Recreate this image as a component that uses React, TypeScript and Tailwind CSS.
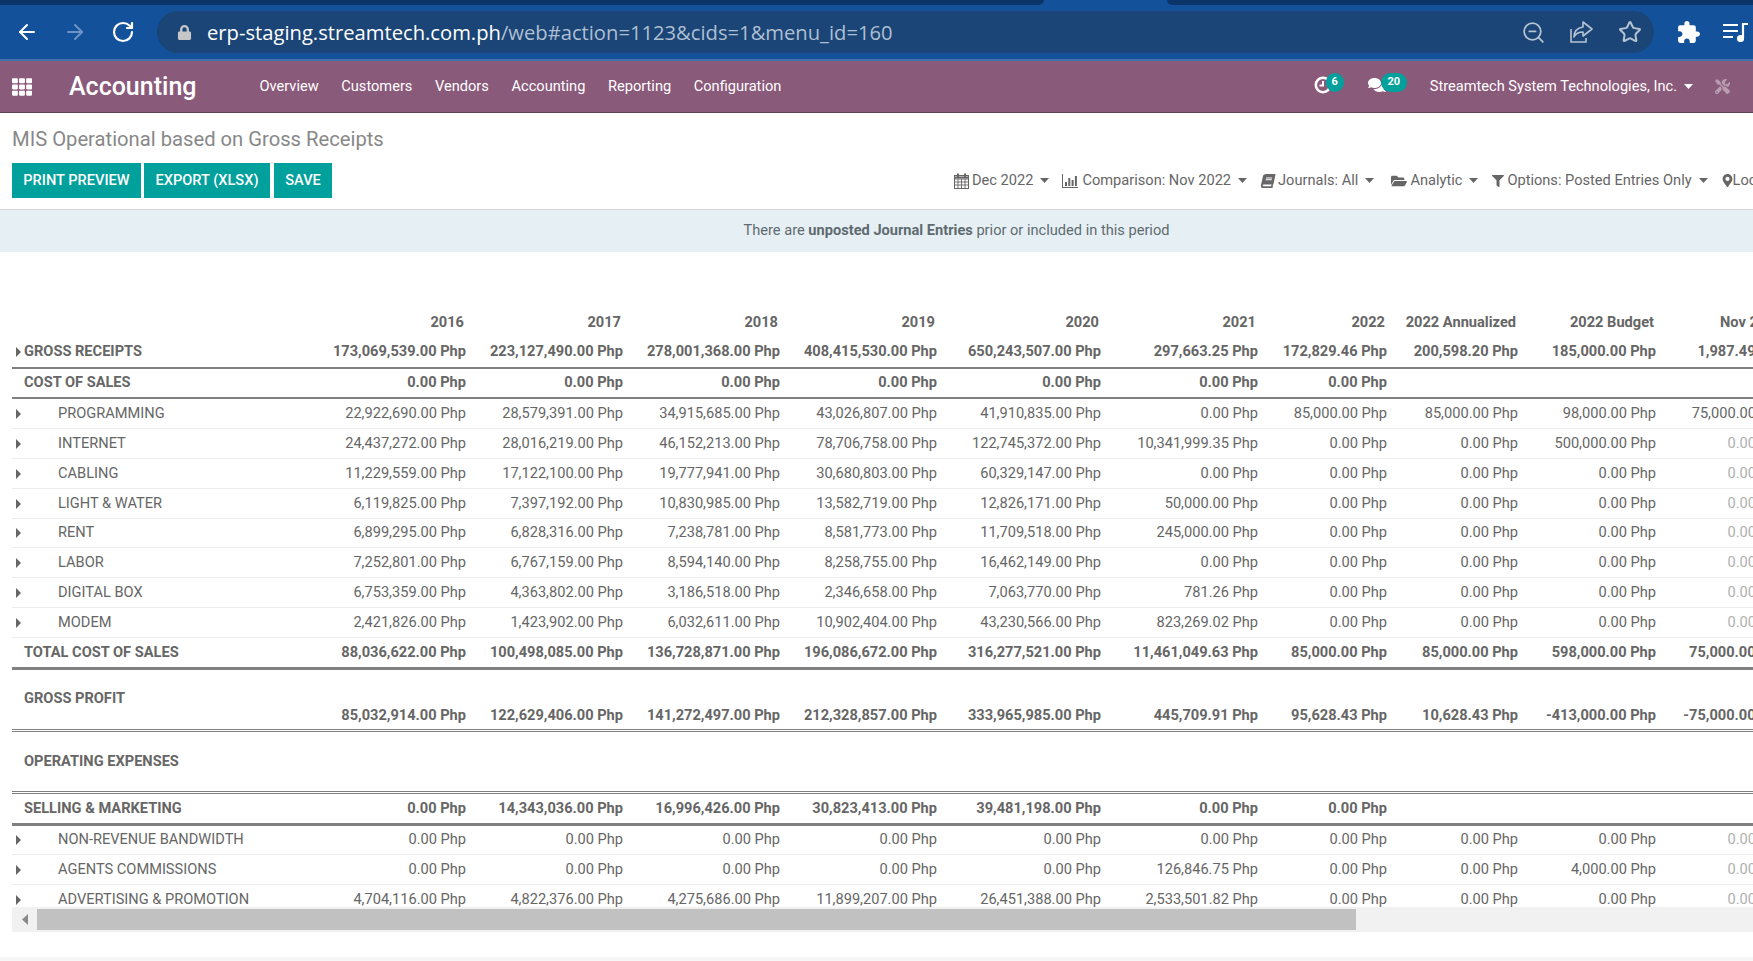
import React from "react";
import { ArrowLeft, ArrowRight, RotateCw, Star, ZoomOut } from "lucide-react";
import { FaBook, FaComments, FaFilter, FaFolderOpen, FaLock, FaMapMarkerAlt, FaTh, FaTools } from "react-icons/fa";

type Kind = "section" | "sub" | "total" | "profit" | "heading" | "selling" | "gross";
type Row = { label: string; kind: Kind; h: string; v: string[] };

const zeros = (n: number) => Array(n).fill("0.00");

const rows: Row[] = [
  { label: "GROSS RECEIPTS", kind: "gross", h: "h-[32px]", v: ["173,069,539.00", "223,127,490.00", "278,001,368.00", "408,415,530.00", "650,243,507.00", "297,663.25", "172,829.46", "200,598.20", "185,000.00", "1,987.49"] },
  { label: "COST OF SALES", kind: "section", h: "h-[30px]", v: zeros(7) },
  { label: "PROGRAMMING", kind: "sub", h: "h-[30px]", v: ["22,922,690.00", "28,579,391.00", "34,915,685.00", "43,026,807.00", "41,910,835.00", "0.00", "85,000.00", "85,000.00", "98,000.00", "75,000.00"] },
  { label: "INTERNET", kind: "sub", h: "h-[30px]", v: ["24,437,272.00", "28,016,219.00", "46,152,213.00", "78,706,758.00", "122,745,372.00", "10,341,999.35", "0.00", "0.00", "500,000.00", "0.00"] },
  { label: "CABLING", kind: "sub", h: "h-[30px]", v: ["11,229,559.00", "17,122,100.00", "19,777,941.00", "30,680,803.00", "60,329,147.00", ...zeros(5)] },
  { label: "LIGHT & WATER", kind: "sub", h: "h-[30px]", v: ["6,119,825.00", "7,397,192.00", "10,830,985.00", "13,582,719.00", "12,826,171.00", "50,000.00", ...zeros(4)] },
  { label: "RENT", kind: "sub", h: "h-[29px]", v: ["6,899,295.00", "6,828,316.00", "7,238,781.00", "8,581,773.00", "11,709,518.00", "245,000.00", ...zeros(4)] },
  { label: "LABOR", kind: "sub", h: "h-[30px]", v: ["7,252,801.00", "6,767,159.00", "8,594,140.00", "8,258,755.00", "16,462,149.00", ...zeros(5)] },
  { label: "DIGITAL BOX", kind: "sub", h: "h-[30px]", v: ["6,753,359.00", "4,363,802.00", "3,186,518.00", "2,346,658.00", "7,063,770.00", "781.26", ...zeros(4)] },
  { label: "MODEM", kind: "sub", h: "h-[30px]", v: ["2,421,826.00", "1,423,902.00", "6,032,611.00", "10,902,404.00", "43,230,566.00", "823,269.02", ...zeros(4)] },
  { label: "TOTAL COST OF SALES", kind: "total", h: "h-[32px]", v: ["88,036,622.00", "100,498,085.00", "136,728,871.00", "196,086,672.00", "316,277,521.00", "11,461,049.63", "85,000.00", "85,000.00", "598,000.00", "75,000.00"] },
  { label: "GROSS PROFIT", kind: "profit", h: "h-[62px]", v: ["85,032,914.00", "122,629,406.00", "141,272,497.00", "212,328,857.00", "333,965,985.00", "445,709.91", "95,628.43", "10,628.43", "-413,000.00", "-75,000.00"] },
  { label: "OPERATING EXPENSES", kind: "heading", h: "h-[62px]", v: [] },
  { label: "SELLING & MARKETING", kind: "selling", h: "h-[32px]", v: ["0.00", "14,343,036.00", "16,996,426.00", "30,823,413.00", "39,481,198.00", "0.00", "0.00"] },
  { label: "NON-REVENUE BANDWIDTH", kind: "sub", h: "h-[29px]", v: zeros(10) },
  { label: "AGENTS COMMISSIONS", kind: "sub", h: "h-[30px]", v: ["0.00", "0.00", "0.00", "0.00", "0.00", "126,846.75", "0.00", "0.00", "4,000.00", "0.00"] },
  { label: "ADVERTISING & PROMOTION", kind: "sub", h: "h-[30px]", v: ["4,704,116.00", "4,822,376.00", "4,275,686.00", "11,899,207.00", "26,451,388.00", "2,533,501.82", ...zeros(4)] },
];

const headers = ["2016", "2017", "2018", "2019", "2020", "2021", "2022", "2022 Annualized", "2022 Budget", "Nov 2022"];
const widths = ["w-[297px]", "w-[157px]", "w-[157px]", "w-[157px]", "w-[157px]", "w-[164px]", "w-[157px]", "w-[129px]", "w-[131px]", "w-[138px]", "w-[129px]"];

const borderFor: Record<Kind, string> = {
  gross: "border-b-2 border-[#808080]",
  section: "border-b-2 border-[#808080]",
  selling: "border-b-[3px] border-[#808080]",
  sub: "border-b border-[#eeeeee]",
  total: "border-b-[3px] border-[#808080]",
  profit: "border-b-[3px] border-double border-[#808080]",
  heading: "border-b-[3px] border-double border-[#808080]",
};

function Caret() {
  return (
    <svg width="5" height="10" viewBox="0 0 5 10" className="shrink-0 fill-[#666666]">
      <path d="M0 0 L5 5 L0 10 Z" />
    </svg>
  );
}

function DownCaret({ className }: { className: string }) {
  return (
    <svg width="9" height="5" viewBox="0 0 9 5" className={className}>
      <path d="M0 0 H9 L4.5 5 Z" />
    </svg>
  );
}

function CalendarGrid() {
  return (
    <svg width="15" height="16" viewBox="0 0 15 16" className="shrink-0" fill="none" stroke="#666666" strokeWidth="1">
      <rect x="0.5" y="2.5" width="14" height="13" />
      <path d="M0.5 6h14M0.5 9h14M0.5 12h14M4 6v9.5M7.5 6v9.5M11 6v9.5" strokeWidth="0.9" />
      <path d="M4 0.5v3.5M11 0.5v3.5" strokeWidth="2" />
      <path d="M0.5 4.5h14" strokeWidth="2" />
    </svg>
  );
}

function BarChart() {
  return (
    <svg width="16" height="14" viewBox="0 0 16 14" className="shrink-0 fill-[#666666]">
      <path d="M0 0h1v13h15v1H0z" />
      <path d="M3 8h2v4H3zM6.3 4h2v8h-2zM9.6 6h2v6h-2zM12.9 2h2v10h-2z" />
    </svg>
  );
}

function ShareIcon() {
  return (
    <svg width="24" height="22" viewBox="0 0 24 22" fill="none" stroke="#b5c3d3" strokeWidth="1.6">
      <path d="M1 8v13h15v-4" />
      <path d="M13 1l9 7-9 7v-4c-4 0-7 1-9 5 0-6 3-9 9-10z" strokeLinejoin="round" />
    </svg>
  );
}

function Extension() {
  return (
    <svg width="25" height="25" viewBox="0 0 24 24" className="fill-white">
      <path d="M20.5 11H19V7c0-1.1-.9-2-2-2h-4V3.5C13 2.12 11.88 1 10.5 1S8 2.12 8 3.5V5H4c-1.1 0-1.99.9-1.99 2v3.8H3.5c1.49 0 2.7 1.21 2.7 2.7s-1.21 2.7-2.7 2.7H2V20c0 1.1.9 2 2 2h3.8v-1.5c0-1.49 1.21-2.7 2.7-2.7 1.49 0 2.7 1.21 2.7 2.7V22H17c1.1 0 2-.9 2-2v-4h1.5c1.38 0 2.5-1.12 2.5-2.5S21.88 11 20.5 11z" />
    </svg>
  );
}

function MusicList() {
  return (
    <svg width="25" height="20" viewBox="0 0 25 20" fill="none" stroke="#ffffff" strokeWidth="2.2">
      <path d="M0 3h15M0 9h15M0 15h10" />
      <path d="M20 16V2h5" />
      <circle cx="17.5" cy="16.5" r="2.5" fill="#ffffff" />
    </svg>
  );
}

function ClockIcon() {
  return (
    <svg width="18" height="18" viewBox="0 0 18 18" fill="none" stroke="#ffffff" strokeWidth="2.6">
      <circle cx="9" cy="9" r="7.2" />
      <path d="M9 5v4.5H5.5" strokeWidth="2" />
    </svg>
  );
}

function Filter({ icon, label, className }: { icon: React.ReactNode; label: string; className: string }) {
  return (
    <div className={`flex shrink-0 items-center whitespace-nowrap ${className}`}>
      <span className="flex w-[18px] shrink-0 items-center">{icon}</span>
      <span>{label}</span>
    </div>
  );
}

function FilterCaret({ className }: { className: string }) {
  return <DownCaret className={`shrink-0 fill-[#666666] ${className}`} />;
}

export default function App() {
  return (
    <div className="flex h-[961px] w-[1753px] flex-col overflow-hidden bg-white font-['Roboto',sans-serif] text-[14.62px] text-[#666666]">
      {/* tab strip */}
      <div className="flex h-[5px] shrink-0 bg-[#13529b]">
        <div className="w-[1044px] rounded-br-[6px] bg-[#0c3468]" />
        <div className="w-[123px]" />
        <div className="flex-1 rounded-bl-[6px] bg-[#0c3468]" />
      </div>

      {/* browser toolbar */}
      <div className="flex h-[56px] shrink-0 items-center border-b-2 border-[#4171a9] bg-[#13529b]">
        <div className="flex w-[157px] shrink-0 items-center pl-[15px]">
          <ArrowLeft size={24} strokeWidth={2} className="text-white" />
          <ArrowRight size={24} strokeWidth={2} className="ml-[24px] text-[#6b94c4]" />
          <RotateCw size={24} strokeWidth={2.2} className="ml-[24px] text-white" />
        </div>
        <div className="flex h-[42px] w-[1497px] shrink-0 items-center rounded-full bg-[#1a4576] pl-[20px] pr-[12px]">
          <FaLock size={15} className="text-[#c6c6c6]" />
          <div className="ml-[15px] whitespace-nowrap font-['Open_Sans',sans-serif] text-[20.2px] text-white">
            erp-staging.streamtech.com.ph<span className="text-[#aebfd2]">/web#action=1123&amp;cids=1&amp;menu_id=160</span>
          </div>
          <div className="ml-auto flex items-center gap-[24px]">
            <ZoomOut size={25} strokeWidth={1.7} className="text-[#b5c3d3]" />
            <ShareIcon />
            <Star size={24} strokeWidth={2} className="text-[#b5c3d3]" />
          </div>
        </div>
        <div className="ml-[22px]">
          <Extension />
        </div>
        <div className="ml-[22px]">
          <MusicList />
        </div>
      </div>

      {/* Odoo navbar */}
      <div className="flex h-[52px] shrink-0 items-center border-b border-[#5d4056] bg-[#8a5a7a] text-white">
        <FaTh size={20} className="ml-[12px]" />
        <div className="ml-[37px] text-[25px] font-medium">Accounting</div>
        <nav className="ml-[63px] flex gap-[22.6px]">
          {["Overview", "Customers", "Vendors", "Accounting", "Reporting", "Configuration"].map((m) => (
            <span key={m}>{m}</span>
          ))}
        </nav>
        <div className="ml-auto flex items-center">
          <div className="relative mb-[4px] h-[18px] w-[54px]">
            <ClockIcon />
            <span className="absolute left-[12px] top-[-3px] flex h-[19px] w-[18px] items-center justify-center rounded-full bg-[#00a09d] text-[11px] font-bold">6</span>
          </div>
          <div className="relative mb-[4px] h-[18px] w-[62px]">
            <FaComments size={18} />
            <span className="absolute left-[13px] top-[-3px] flex h-[19px] w-[26px] items-center justify-center rounded-full bg-[#00a09d] text-[11px] font-bold">20</span>
          </div>
          <span className="whitespace-nowrap">Streamtech System Technologies, Inc.</span>
          <DownCaret className="ml-[7px] fill-white" />
          <FaTools size={15} className="ml-[22px] mr-[23px] text-white opacity-40" />
        </div>
      </div>

      {/* control panel */}
      <div className="flex h-[97px] shrink-0 flex-col border-b border-[#d4d4d4]">
        <div className="pl-[12px] pt-[13px] text-[20.22px] leading-[26px] text-[#888888]">MIS Operational based on Gross Receipts</div>
        <div className="mt-[11px] flex h-[35px] items-center overflow-hidden pl-[12px]">
          <div className="flex shrink-0 gap-[3px] font-medium text-white">
            <span className="flex h-[35px] w-[129px] items-center justify-center bg-[#00a09d]">PRINT PREVIEW</span>
            <span className="flex h-[35px] w-[126px] items-center justify-center bg-[#00a09d]">EXPORT (XLSX)</span>
            <span className="ml-[1px] flex h-[35px] w-[58px] items-center justify-center bg-[#00a09d]">SAVE</span>
          </div>
          <div className="ml-[622px] flex items-center">
            <Filter icon={<CalendarGrid />} label="Dec 2022" className="" />
            <FilterCaret className="ml-[7px]" />
            <Filter icon={<BarChart />} label="Comparison: Nov 2022" className="ml-[13px] [&>span:first-child]:w-[20px]" />
            <FilterCaret className="ml-[7px]" />
            <Filter icon={<span className="-skew-x-12"><FaBook size={14} /></span>} label="Journals: All" className="ml-[14px] [&>span:first-child]:w-[17px]" />
            <FilterCaret className="ml-[7px]" />
            <Filter icon={<FaFolderOpen size={16} />} label="Analytic" className="ml-[17px] [&>span:first-child]:w-[19px]" />
            <FilterCaret className="ml-[7px]" />
            <Filter icon={<FaFilter size={12} />} label="Options: Posted Entries Only" className="ml-[14px] [&>span:first-child]:w-[15px]" />
            <FilterCaret className="ml-[7px]" />
            <Filter icon={<FaMapMarkerAlt size={13} />} label="Location" className="ml-[14px] [&>span:first-child]:w-[11px]" />
          </div>
        </div>
      </div>

      {/* alert */}
      <div className="flex h-[42px] shrink-0 items-center justify-center bg-[#e6f0f4] pl-[160px] text-[#5f6b70]">
        <span>
          There are <b className="font-bold">unposted Journal Entries</b> prior or included in this period
        </span>
      </div>

      {/* report table */}
      <div className="h-[655px] shrink-0 overflow-hidden pl-[12px] pt-[57px]">
        <table className="w-[1773px] table-fixed border-separate border-spacing-0">
          <colgroup>
            {widths.map((w, i) => (
              <col key={i} className={w} />
            ))}
          </colgroup>
          <thead>
            <tr>
              <th className="h-[28px]" />
              {headers.map((h) => (
                <th key={h} className="h-[28px] whitespace-nowrap pr-[2px] text-right font-bold">
                  {h}
                </th>
              ))}
            </tr>
          </thead>
          <tbody>
            {rows.map((r) => {
              const isSub = r.kind === "sub";
              const bold = isSub ? "font-normal" : "font-bold";
              const b = borderFor[r.kind];
              const valueAlign = r.kind === "profit" ? "align-bottom pb-[2px]" : "";
              const labelAlign = r.kind === "profit" ? "align-top pt-[18px]" : r.kind === "heading" ? "align-top pt-[19px]" : "";
              return (
                <tr key={r.label}>
                  <td className={`${r.h} ${b} ${bold} ${labelAlign} whitespace-nowrap`}>
                    <div className="flex items-center pl-[3.5px]">
                      {isSub || r.kind === "gross" ? <Caret /> : <span className="w-[5px] shrink-0" />}
                      <span className={isSub ? "ml-[37.5px]" : "ml-[3.5px]"}>{r.label}</span>
                    </div>
                  </td>
                  {headers.map((_, i) => {
                    const val = r.v[i];
                    const muted = isSub && i === 9 && val === "0.00";
                    return (
                      <td
                        key={i}
                        className={`${r.h} ${b} ${bold} ${valueAlign} whitespace-nowrap text-right ${muted ? "text-[#b0b0b0]" : ""}`}
                      >
                        {val ? `${val} Php` : ""}
                      </td>
                    );
                  })}
                </tr>
              );
            })}
          </tbody>
        </table>
      </div>

      {/* horizontal scrollbar */}
      <div className="ml-[12px] flex h-[25px] shrink-0 bg-[#f1f1f1]">
        <div className="flex w-[25px] shrink-0 items-center justify-center">
          <svg width="6" height="11" viewBox="0 0 6 11" className="fill-[#8a8a8a]">
            <path d="M6 0 L0 5.5 L6 11 Z" />
          </svg>
        </div>
        <div className="my-[2px] w-[1319px] bg-[#c1c1c1]" />
      </div>
      <div className="h-[25px] shrink-0" />
      <div className="h-[4px] shrink-0 bg-[#f7f7f7]" />
    </div>
  );
}
